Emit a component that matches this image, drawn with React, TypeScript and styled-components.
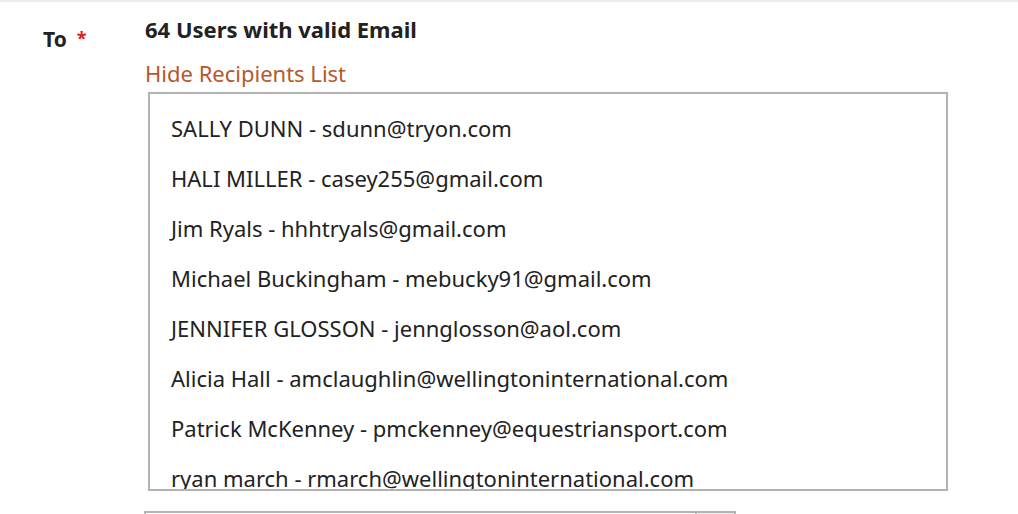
import React from "react";
import styled, { createGlobalStyle } from "styled-components";

const Global = createGlobalStyle`
  html, body { margin: 0; padding: 0; background: #fff; }
  body { font-family: "Noto Sans", "Open Sans", sans-serif; color: #222; overflow: hidden; }
`;

const Page = styled.div`
  border-top: 2px solid #ececec;
  height: 512px;
  overflow: hidden;
`;

const FieldRow = styled.div`
  display: flex;
  padding-top: 14px;
`;

const LabelCol = styled.div`
  width: 145px;
  flex: none;
  padding-left: 43px;
  padding-top: 10px;
  box-sizing: border-box;
  display: flex;
  align-items: flex-start;
  gap: 10px;
`;

const Label = styled.span`
  font-size: 21px;
  font-weight: 700;
  line-height: 26px;
  color: #222;
`;

const Required = styled.span`
  color: #e02020;
  font-size: 18px;
  font-weight: 700;
  line-height: 18px;
  margin-top: 3px;
`;

const Content = styled.div`
  flex: 1;
  display: flex;
  flex-direction: column;
`;

const Count = styled.div`
  font-size: 22px;
  font-weight: 700;
  line-height: 26px;
`;

const ToggleLink = styled.a`
  font-size: 22px;
  color: #b5592a;
  line-height: 26px;
  margin-top: 18px;
  cursor: pointer;
  text-decoration: none;
`;

const ListBox = styled.div`
  margin-top: 6px;
  margin-left: 3px;
  width: 800px;
  height: 399px;
  box-sizing: border-box;
  border: 2px solid #b3b3b3;
  padding: 21px 0 0 21px;
  overflow: hidden;
`;

const Recipient = styled.div`
  font-size: 22px;
  line-height: 26px;
  height: 50px;
  color: #222;
  white-space: nowrap;
`;

const InputRow = styled.div`
  display: flex;
  margin-top: 20px;
  margin-left: -1px;
`;

const TextInput = styled.div`
  width: 549px;
  height: 30px;
  border: 2px solid #b3b3b3;
  border-right: none;
`;

const AddButton = styled.div`
  width: 37px;
  height: 30px;
  border: 2px solid #b3b3b3;
  background: #efefef;
`;

const recipients = [
  "SALLY DUNN - sdunn@tryon.com",
  "HALI MILLER - casey255@gmail.com",
  "Jim Ryals - hhhtryals@gmail.com",
  "Michael Buckingham - mebucky91@gmail.com",
  "JENNIFER GLOSSON - jennglosson@aol.com",
  "Alicia Hall - amclaughlin@wellingtoninternational.com",
  "Patrick McKenney - pmckenney@equestriansport.com",
  "ryan march - rmarch@wellingtoninternational.com",
  "Laura Smith - lsmith@gmail.com",
];

export default function App() {
  return (
    <>
      <Global />
      <Page>
        <FieldRow>
          <LabelCol>
            <Label>To</Label>
            <Required>*</Required>
          </LabelCol>
          <Content>
            <Count>64 Users with valid Email</Count>
            <ToggleLink>Hide Recipients List</ToggleLink>
            <ListBox>
              {recipients.map((r) => (
                <Recipient key={r}>{r}</Recipient>
              ))}
            </ListBox>
            <InputRow>
              <TextInput />
              <AddButton />
            </InputRow>
          </Content>
        </FieldRow>
      </Page>
    </>
  );
}
